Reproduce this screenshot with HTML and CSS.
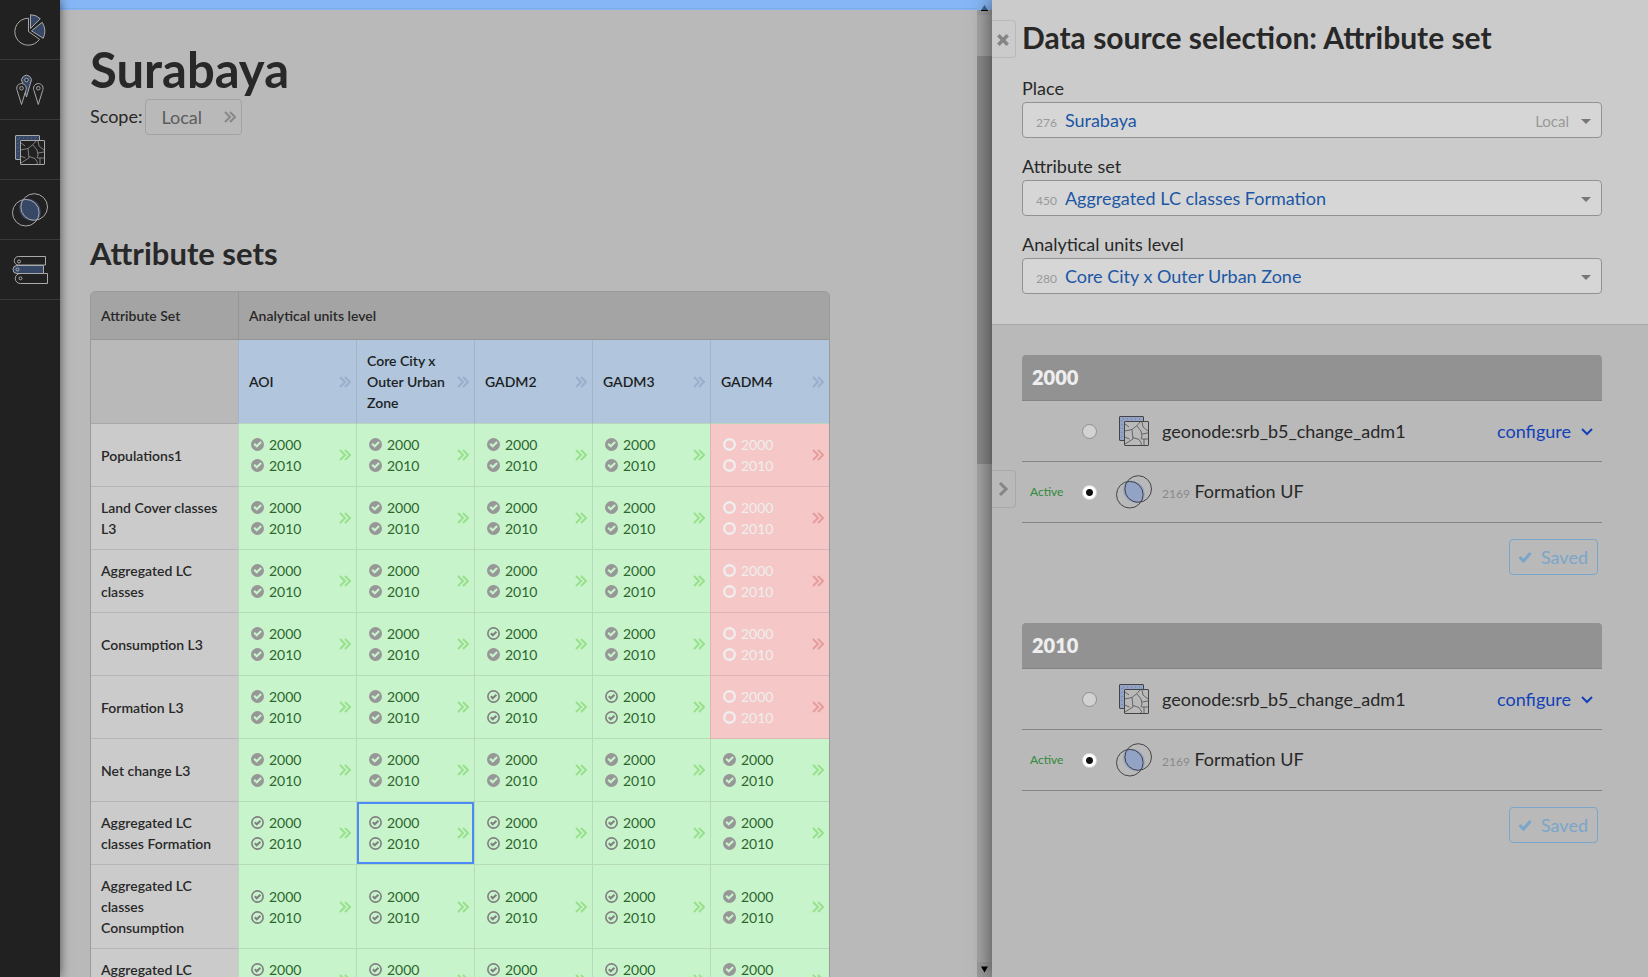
FILE: index.html
```html
<!DOCTYPE html>
<html lang="en">
<head>
<meta charset="utf-8">
<title>Surabaya – Data sources</title>
<link rel="stylesheet" href="styles.css">
</head>
<body>
<svg class="sprite" aria-hidden="true">
  <symbol id="i-pie" viewBox="0 0 60 60">
    <path class="line" d="M28.5 18.2V31.500L39.500 39.300A13.500 13.500 0 1 1 28.500 18.200Z"/>
    <path class="line fill" d="M30.500 28.500V14.700Q36.500 14.800 40.300 18.800Z"/>
    <path class="line fill" d="M31.500 30.800L42.200 22.300Q47 30 43.200 38.300Z"/>
  </symbol>
  <symbol id="i-pins" viewBox="0 0 60 60">
    <path class="line fill" d="M26.500 37L22.500 23A4.900 4.900 0 1 1 30.500 23Z"/>
    <circle class="line dark" cx="26.500" cy="20" r="1.800"/>
    <path class="line dark" d="M21.500 44.500L17.200 30.500A4.800 4.800 0 1 1 25.800 30.500Z"/>
    <circle class="line" cx="21.500" cy="28.200" r="1.800"/>
    <path class="line dark" d="M38.300 44.500L34 30.500A4.800 4.800 0 1 1 42.600 30.500Z"/>
    <circle class="line" cx="38.300" cy="28.200" r="1.800"/>
  </symbol>
  <symbol id="i-map" viewBox="0 0 58 60">
    <rect class="line fill" x="15.500" y="15.500" width="24" height="24" rx="0.500"/>
    <path class="specks" d="M18 19v18M19 18h18"/>
    <rect class="line dark" x="20.500" y="20.500" width="24" height="24" rx="0.500"/>
    <path class="thin" d="M20.500 30l7.500-1.500 5-4 3.500-4M28 28.500L29 38l-8 5M29 36.500l6 2 2.500 4-1 2M20.500 36l5 2M38 21l1 5 5 4M33 25l4 5 1 5-1 3M38 33l6-1M37.500 38h7M40 38v6M21 23l4 3"/>
  </symbol>
  <symbol id="i-venn" viewBox="0 0 58 60">
    <path class="fill" d="M21.500 20A13.500 13.500 0 0 1 38.500 39.800A13.500 13.500 0 0 1 21.500 20Z"/>
    <circle class="line" cx="25.800" cy="32.700" r="13.300"/>
    <circle class="line" cx="34.200" cy="27" r="13.300"/>
  </symbol>
  <symbol id="i-books" viewBox="0 0 60 60">
    <path class="line" d="M18.500 16.500H45.500V25H18.500A4.250 4.250 0 0 1 18.500 16.500Z"/>
    <path class="line" d="M20 33.500H47.500V43.500H20.500A5 5 0 0 1 20 33.500Z"/>
    <path class="line fill" d="M17 25.500H43.500V33.500H17A4 4 0 0 1 17 25.500Z"/>
    <circle class="line" cx="19" cy="21.500" r="1.500"/>
    <circle class="line" cx="17.500" cy="29.500" r="1.500"/>
    <circle class="line" cx="20.500" cy="38.300" r="1.500"/>
  </symbol>
  <symbol id="i-double" viewBox="0 0 12 12">
    <path class="stroke" d="M1 1l5 5-5 5M6 1l5 5-5 5"/>
  </symbol>
  <symbol id="i-full" viewBox="0 0 12 12">
    <path fill="currentColor" fill-rule="evenodd" d="M6 0a6 6 0 1 1 0 12A6 6 0 0 1 6 0ZM2.200 6L5.300 9.100 10 4.400 8.600 3 5.300 6.300 3.600 4.600Z"/>
  </symbol>
  <symbol id="i-outline" viewBox="0 0 12 12">
    <circle cx="6" cy="6" r="5.200" fill="none" stroke="currentColor" stroke-width="1.500"/>
    <path d="M3.500 5.800L5.300 7.600L8.700 4.300" fill="none" stroke="currentColor" stroke-width="1.900"/>
  </symbol>
  <symbol id="i-empty" viewBox="0 0 12 12">
    <circle cx="6" cy="6" r="4.900" fill="none" stroke="currentColor" stroke-width="2.200"/>
  </symbol>
</svg>

<div class="app">
  <nav class="sidebar" aria-label="Sections">
    <button class="nav-item" aria-label="Attributes"><svg class="ico"><use href="#i-pie"/></svg></button>
    <button class="nav-item" aria-label="Places"><svg class="ico"><use href="#i-pins"/></svg></button>
    <button class="nav-item" aria-label="Layers"><svg class="ico ico-narrow"><use href="#i-map"/></svg></button>
    <button class="nav-item" aria-label="Analyses"><svg class="ico ico-narrow"><use href="#i-venn"/></svg></button>
    <button class="nav-item" aria-label="Metadata"><svg class="ico"><use href="#i-books"/></svg></button>
  </nav>

  <main class="main">
    <div class="topbar"></div>
    <div class="page">
      <h1 class="title">Surabaya</h1>
      <div class="scope">
        <span>Scope:</span>
        <button class="scope-btn">Local <svg class="double"><use href="#i-double"/></svg></button>
      </div>
      <h2 class="subtitle">Attribute sets</h2>
      <table class="matrix">
        <colgroup><col class="col-name"><col class="col-level" span="4"><col></colgroup>
        <thead>
          <tr><th scope="col">Attribute Set</th><th scope="colgroup" colspan="5">Analytical units level</th></tr>
        </thead>
        <tbody id="matrix-body"></tbody>
      </table>
    </div>
    <div class="scroll" aria-hidden="true">
      <svg class="scroll-btn" viewBox="0 0 15 15"><path fill="#3f6494" d="M4 10.500h7L7.500 5z"/><path d="M4 10h7v1H4z"/></svg>
      <div class="scroll-track"><div class="scroll-thumb"></div></div>
      <svg class="scroll-btn" viewBox="0 0 15 15"><path d="M4 4.500h7L7.500 10.500z"/></svg>
    </div>
  </main>

  <aside class="panel">
    <button class="tab tab-close" aria-label="Close"><svg viewBox="0 0 12 12"><path d="M2 2l8 8M10 2l-8 8"/></svg></button>
    <button class="tab tab-next" aria-label="Collapse"><svg viewBox="0 0 12 16"><path d="M3 2l6 6-6 6"/></svg></button>
    <header class="panel-head">
      <h2 class="panel-title">Data source selection: Attribute set</h2>
      <div class="field">
        <label for="place">Place</label>
        <div class="select"><span class="id">276</span><select id="place"><option>Surabaya</option></select><span class="suffix">Local</span><i class="caret"></i></div>
      </div>
      <div class="field">
        <label for="attset">Attribute set</label>
        <div class="select"><span class="id">450</span><select id="attset"><option>Aggregated LC classes Formation</option></select><i class="caret"></i></div>
      </div>
      <div class="field">
        <label for="level">Analytical units level</label>
        <div class="select"><span class="id">280</span><select id="level"><option>Core City x Outer Urban Zone</option></select><i class="caret"></i></div>
      </div>
    </header>
    <div class="panel-body">
      <section class="period">
        <h3 class="period-title">2000</h3>
        <div class="source">
          <span class="state"></span>
          <input type="radio" name="p2000" id="p2000a">
          <svg class="ico ico-narrow"><use href="#i-map"/></svg>
          <label for="p2000a">geonode:srb_b5_change_adm1</label>
          <button class="configure">configure <svg viewBox="0 0 12 8"><path d="M1 1l5 5 5-5"/></svg></button>
        </div>
        <div class="source">
          <span class="state">Active</span>
          <input type="radio" name="p2000" id="p2000b" checked>
          <svg class="ico ico-narrow"><use href="#i-venn"/></svg>
          <label for="p2000b"><span class="id">2169</span> Formation UF</label>
        </div>
        <button class="saved"><svg viewBox="0 0 14 12"><path d="M1.500 6l4 4 7-8"/></svg>Saved</button>
      </section>
      <section class="period">
        <h3 class="period-title">2010</h3>
        <div class="source">
          <span class="state"></span>
          <input type="radio" name="p2010" id="p2010a">
          <svg class="ico ico-narrow"><use href="#i-map"/></svg>
          <label for="p2010a">geonode:srb_b5_change_adm1</label>
          <button class="configure">configure <svg viewBox="0 0 12 8"><path d="M1 1l5 5 5-5"/></svg></button>
        </div>
        <div class="source">
          <span class="state">Active</span>
          <input type="radio" name="p2010" id="p2010b" checked>
          <svg class="ico ico-narrow"><use href="#i-venn"/></svg>
          <label for="p2010b"><span class="id">2169</span> Formation UF</label>
        </div>
        <button class="saved"><svg viewBox="0 0 14 12"><path d="M1.500 6l4 4 7-8"/></svg>Saved</button>
      </section>
    </div>
  </aside>
</div>
<script src="matrix.js"></script>
</body>
</html>
```

FILE: matrix.js
```js
// Status codes per level: f = full, o = outline, e = empty; one letter per year.
const levels = ['AOI', 'Core City x Outer Urban Zone', 'GADM2', 'GADM3', 'GADM4'];
const years = ['2000', '2010'];
const rows = [
  ['Populations1', 'ff ff ff ff ee'],
  ['Land Cover classes L3', 'ff ff ff ff ee'],
  ['Aggregated LC classes', 'ff ff ff ff ee'],
  ['Consumption L3', 'ff ff of ff ee'],
  ['Formation L3', 'ff ff oo oo ee'],
  ['Net change L3', 'ff ff ff ff ff'],
  ['Aggregated LC classes Formation', 'oo oo oo oo ff'],
  ['Aggregated LC classes Consumption', 'oo oo oo oo ff'],
  ['Aggregated LC classes', 'oo oo oo oo ff'],
];
const selected = { row: 6, col: 1 };
const icons = { f: 'i-full', o: 'i-outline', e: 'i-empty' };
const arrow = '<svg class="double"><use href="#i-double"/></svg>';

const head = '<tr class="levels"><td></td>' + levels.map(name =>
  `<th scope="col"><button class="cell"><span>${name}</span>${arrow}</button></th>`).join('') + '</tr>';

const body = rows.map(([name, codes], r) => {
  const cells = codes.split(' ').map((code, c) => {
    const kind = code === 'ee' ? 'missing' : 'ok';
    const on = r === selected.row && c === selected.col ? ' selected' : '';
    const list = years.map((year, i) =>
      `<span class="year ${icons[code[i]]}"><svg class="mark"><use href="#${icons[code[i]]}"/></svg>${year}</span>`).join('');
    return `<td class="${kind}${on}"><button class="cell"><span>${list}</span>${arrow}</button></td>`;
  }).join('');
  return `<tr><th scope="row">${name}</th>${cells}</tr>`;
}).join('');

document.getElementById('matrix-body').innerHTML = head + body;
```

FILE: styles.css
```css
* { box-sizing: border-box; }
html, body { height: 100%; margin: 0; }
body {
  font-family: Lato, "Liberation Sans", sans-serif;
  font-size: 18px;
  line-height: 24px;
  color: #282828;
  background: #b9b9b9;
  overflow: hidden;
}
button {
  font: inherit;
  color: inherit;
  background: none;
  border: 0;
  padding: 0;
  text-align: left;
}
h1, h2, h3 { margin: 0; }
.sprite { position: absolute; width: 0; height: 0; }

.app { display: flex; height: 100vh; }

/* Icons */
.ico { display: block; flex: none; width: 60px; height: 60px; --line: #444; --fill: #93a3c6; --back: #b9b9b9; }
.ico-narrow { width: 58px; }
.line { stroke: var(--line); stroke-width: 1; fill: none; }
.fill { fill: var(--fill); }
.dark { fill: var(--back); }
.thin { stroke: var(--line); stroke-width: 0.7; fill: none; }
.specks { stroke: var(--line); stroke-width: 0.7; stroke-dasharray: 1 3; fill: none; opacity: .6; }
.stroke { stroke: currentColor; stroke-width: 2; fill: none; }
.double { flex: none; width: 12px; height: 12px; }

/* Sidebar */
.sidebar { flex: none; width: 60px; background: #212121; position: relative; z-index: 2; box-shadow: 0 0 10px rgba(0, 0, 0, .6); }
.nav-item { display: block; width: 60px; height: 60px; border-bottom: 1px solid #393939; }
.nav-item .ico { --line: #a9a9a9; --fill: #374766; --back: #212121; }

/* Main */
.main { flex: 1; min-width: 0; position: relative; overflow: hidden; }
.topbar { height: 10px; background: #86b6f5; box-shadow: inset 0 -1px #86b6f5, inset 0 -2px #7dabe8; }
.page { padding: 29px 45px 0 30px; }
.title { font-size: 49px; line-height: 60px; font-weight: 700; }
.scope { display: flex; align-items: center; gap: 3px; }
.scope > span { padding-bottom: 2px; }
.scope-btn {
  display: flex;
  align-items: center;
  gap: 22px;
  height: 36px;
  padding: 0 5px 1px 15px;
  color: #5c5c5c;
  border: 1px solid #a2a2a2;
  border-radius: 4px;
}
.scope-btn .double { color: #888; --thin: 1; }
.scope-btn .double { stroke-width: 1; }
.subtitle { margin-top: 99px; font-size: 31px; line-height: 38px; font-weight: 700; }

.matrix {
  width: 740px;
  margin-top: 19px;
  table-layout: fixed;
  border-collapse: separate;
  border-spacing: 0;
  border: 1px solid #9b9b9b;
  border-radius: 5px;
  overflow: hidden;
  font-size: 14px;
  line-height: 21px;
}
.col-name { width: 147px; }
.col-level { width: 118px; }
.matrix th { font-weight: 600; text-align: left; }
.matrix th, .matrix td { padding: 0; border-bottom: 1px solid rgba(120, 120, 120, .25); border-left: 1px solid rgba(120, 120, 120, .25); }
.matrix tr > :first-child { border-left: 0; }
.matrix thead th { height: 48px; padding: 0 10px; background: #a4a4a4; border-color: #959595; }
.matrix tbody th[scope="row"] { padding: 10px; background: #cbcbcb; }
.levels th { background: #b1c5dc; color: #1b1f24; background-clip: padding-box; }
.matrix .levels th { border-color: #a1b4ca; border-bottom-color: #b5d6bb; }
.levels .double { color: #9aaecd; }
.cell { display: flex; width: 100%; align-items: center; justify-content: space-between; padding: 10px 5px 10px 10px; }
.year { display: flex; align-items: center; gap: 5px; padding-left: 2px; }
.mark { flex: none; width: 13px; height: 13px; color: #979797; }
.i-outline .mark { color: #808080; }
.matrix .ok { background: #c8f4cc; color: #2c662d; border-color: #b5dbb9; }
.ok .double { color: #98e08b; }
.matrix .missing { background: #f5c8c7; color: #eee; border-color: #dcb5b4; }
.missing .mark { color: #eee; }
.missing .double { color: #e59c9b; }
.selected { box-shadow: inset 0 0 0 2px #4c8af8; }

.scroll { position: absolute; top: 0; right: 0; bottom: 0; width: 15px; display: flex; flex-direction: column; background: #a5a5a5; }
.scroll-btn { flex: none; width: 15px; height: 15px; background: #9b9b9b; }
.scroll-btn:first-child { background: linear-gradient(#86b6f5 10px, #9b9b9b 10px); }
.scroll-track { flex: 1; padding-top: 41px; }
.scroll-thumb { height: 45%; background: #8b8b8b; }

/* Panel */
.panel { flex: none; width: 656px; position: relative; background: #b9b9b9; box-shadow: 0 0 20px rgba(0, 0, 0, .6); }
.tab { position: absolute; left: 0; width: 24px; height: 38px; padding: 0 0 0 4px; border: 1px solid #b9b9b9; border-left: 0; border-radius: 0 4px 4px 0; }
.tab svg { display: block; width: 14px; height: 16px; fill: none; stroke: #858585; stroke-width: 3; }
.tab-close { top: 20px; padding-top: 2px; }
.tab-next { top: 470px; border-color: #a8a8a8; }
.panel-head { padding: 17px 46px 30px 30px; background: #cbcbcb; border-bottom: 1px solid #a6a6a6; }
.panel-title { font-size: 30px; line-height: 40px; font-weight: 700; margin-bottom: 19px; }
.field + .field { margin-top: 16px; }
.field label { display: block; height: 26px; line-height: 25px; }
.select {
  display: flex;
  align-items: baseline;
  height: 36px;
  padding: 5px 10px 0 13px;
  background: #d6d6d6;
  border: 1px solid #929292;
  border-radius: 4px;
}
.id { font-size: 12px; color: #999; }
.select select {
  flex: 1;
  min-width: 0;
  height: 24px;
  margin: 0 0 0 8px;
  padding: 0;
  border: 0;
  appearance: none;
  background: none;
  font: inherit;
  color: #1c56a5;
}
.suffix { font-size: 15px; color: #999; margin-right: 12px; }
.caret { align-self: center; margin-top: -3px; border: 5px solid transparent; border-top-color: #777; border-bottom: 0; }

.panel-body { padding: 30px 46px 0 30px; }
.period { display: flex; flex-direction: column; margin-bottom: 48px; }
.period-title {
  height: 46px;
  padding: 0 10px;
  font-size: 20px;
  line-height: 45px;
  font-weight: 800;
  color: #eee;
  background: #929292;
  border-bottom: 1px solid #848484;
  border-radius: 4px 4px 0 0;
}
.source { display: flex; align-items: center; height: 61px; border-bottom: 1px solid #848484; }
.source label { flex: 1; }
.source label .id { color: #8a8a8a; }
.state { width: 60px; padding-left: 8px; font-size: 12px; color: #2f8a3a; }
.source input {
  appearance: none;
  flex: none;
  width: 15px;
  height: 15px;
  margin: 0 7px 0 0;
  border: 1px solid #8f8f8f;
  border-radius: 50%;
  background: #d2d2d2;
}
.source input:checked { border-color: #ddd; background: radial-gradient(circle, #111 3px, #fff 4px); }
.configure { display: flex; align-items: center; gap: 10px; padding-right: 9px; color: #1341b8; }
.configure svg { width: 12px; height: 8px; margin-top: 2px; fill: none; stroke: currentColor; stroke-width: 2; }
.saved {
  display: flex;
  align-items: center;
  gap: 9px;
  align-self: flex-end;
  height: 36px;
  margin: 16px 4px 0 0;
  padding: 0 9px 1px 8px;
  color: #79a6ca;
  border: 1px solid #79a6ca;
  border-radius: 4px;
}
.saved svg { width: 14px; height: 12px; fill: none; stroke: currentColor; stroke-width: 3; }
```
